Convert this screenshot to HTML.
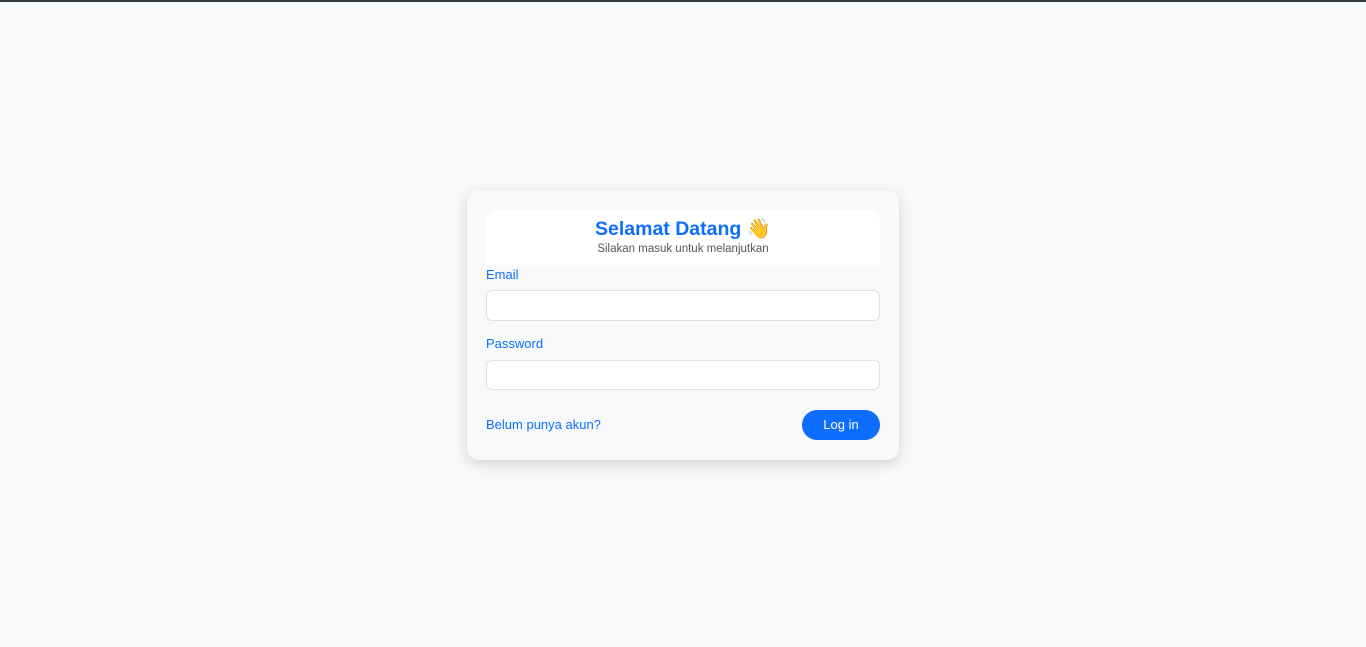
<!DOCTYPE html>
<html><head><meta charset="utf-8"><style>
*{box-sizing:border-box;margin:0;padding:0}
body{width:1366px;height:647px;background:#f8f9fa;font-family:"Liberation Sans","DejaVu Sans",sans-serif;position:relative;overflow:hidden}
.bar{position:absolute;left:0;top:0;width:1366px;height:2px;background:#343a40}
.card{position:absolute;left:467px;top:190px;width:432px;height:270px;background:#f8f9fa;border-radius:12px;box-shadow:0 4px 14px rgba(0,0,0,.15)}
.hd{position:absolute;left:19px;top:20px;width:394px;height:55px;background:#fff;border-radius:12px 12px 0 0;text-align:center}
.hd h1{font-size:19.5px;font-weight:bold;color:#0d6efd;margin-top:7px;line-height:24px}
.hd p{font-size:11.5px;color:#555;margin-top:2px}
.lbl{position:absolute;left:19px;font-size:13px;color:#0d6efd}
.inp{position:absolute;left:19px;width:394px;height:31px;background:#fff;border:1px solid #dee2e6;border-radius:6px}
.btn{position:absolute;left:335px;top:220px;width:78px;height:30px;background:#0d6efd;border-radius:15px;color:#fff;font-size:13px;text-align:center;line-height:30px}
</style></head><body>
<div class="bar"></div>
<div class="card">
<div class="hd"><h1>Selamat Datang 👋</h1><p>Silakan masuk untuk melanjutkan</p></div>
<div class="lbl" style="top:77px">Email</div>
<div class="inp" style="top:100px"></div>
<div class="lbl" style="top:146px">Password</div>
<div class="inp" style="top:170px;height:30px"></div>
<div class="lbl" style="top:227px">Belum punya akun?</div>
<div class="btn">Log in</div>
</div>
</body></html>
